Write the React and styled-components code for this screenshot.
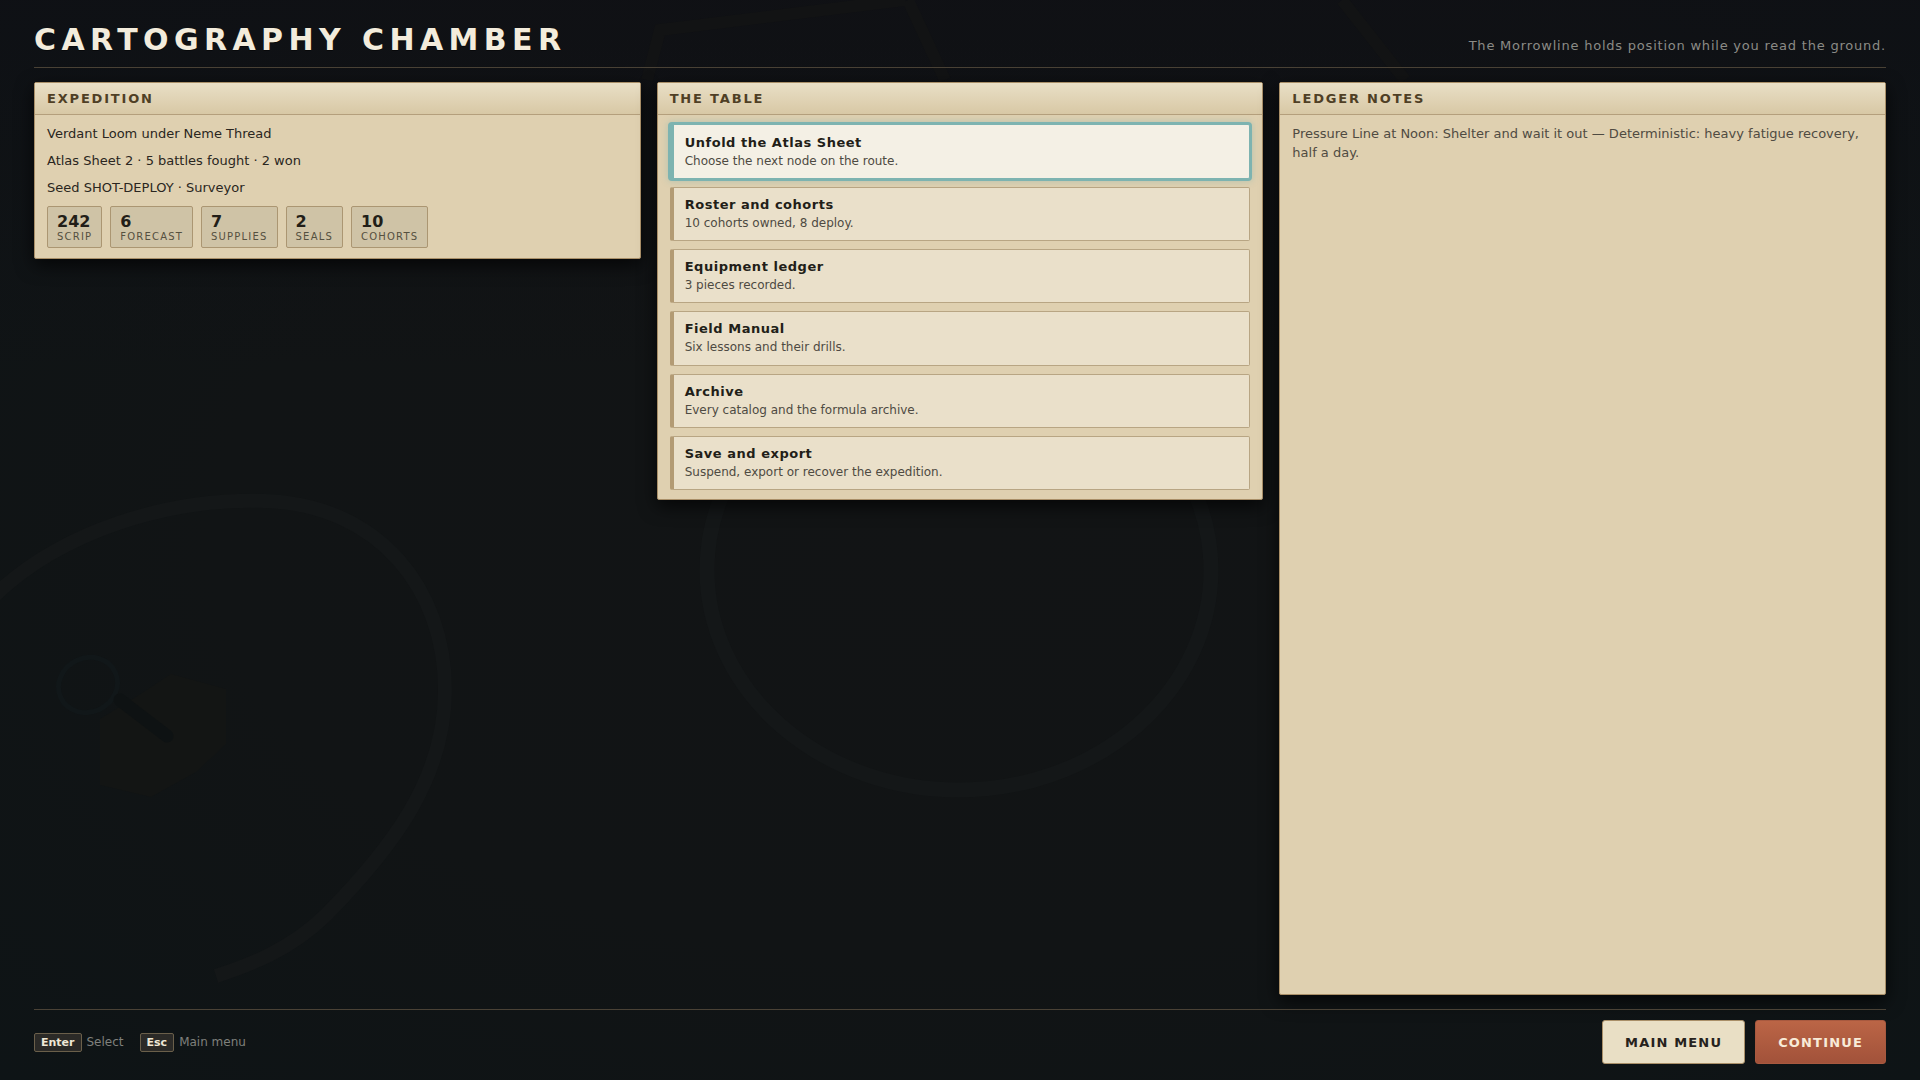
import React from "react";
import styled, { createGlobalStyle } from "styled-components";

const Global = createGlobalStyle`
  html, body { margin: 0; padding: 0; height: 100%; background: #101415; }
  #root { height: 100%; }
  * { box-sizing: border-box; }
`;

const Screen = styled.div`
  position: relative;
  width: 100%;
  height: 1080px;
  overflow: hidden;
  background:
    linear-gradient(180deg, rgba(15, 14, 20, .55) 0%, rgba(15, 14, 20, 0) 35%),
    radial-gradient(ellipse at 50% 50%, #121415 0%, #111415 55%, #0e1416 100%);
  font-family: "DejaVu Sans", sans-serif;
`;

const Backdrop = styled.svg`
  position: absolute;
  inset: 0;
  width: 1920px;
  height: 1080px;
  pointer-events: none;
`;

const Layout = styled.div`
  position: relative;
  height: 100%;
  padding: 16px 34px 16px;
  display: flex;
  flex-direction: column;
`;

const Header = styled.header`
  display: flex;
  justify-content: space-between;
  align-items: flex-end;
  height: 52px;
  padding-bottom: 9px;
  border-bottom: 1px solid #4a4236;
  margin-bottom: 14px;
`;

const Title = styled.h1`
  margin: 0;
  font-size: 30px;
  line-height: 36px;
  font-weight: 700;
  letter-spacing: 0.18em;
  color: #f3ecdc;
  text-shadow: 0 1px 0 rgba(0,0,0,.5);
`;

const Tagline = styled.p`
  margin: 0 0 4px;
  font-size: 13px;
  line-height: 16px;
  letter-spacing: 0.06em;
  color: #8b8b86;
`;

const Columns = styled.main`
  flex: 1;
  min-height: 0;
  display: grid;
  grid-template-columns: repeat(3, 1fr);
  gap: 16px;
  align-items: start;
`;

const Panel = styled.section`
  background: #dfd0b0;
  border: 1px solid #a98f68;
  border-radius: 2px;
  box-shadow: 0 6px 18px rgba(0,0,0,.7);
  height: ${(p) => (p.$fill ? "100%" : "auto")};
`;

const PanelHead = styled.h2`
  margin: 0;
  height: 32px;
  padding: 0 12px;
  display: flex;
  align-items: center;
  font-size: 13px;
  font-weight: 700;
  letter-spacing: 0.14em;
  color: #4f3f25;
  background: linear-gradient(180deg, #e9dfc6 0%, #d8c8a5 100%);
  border-bottom: 1px solid #b49f7c;
`;

const PanelBody = styled.div`
  padding: 9px 12px 10px;
`;

const Line = styled.p`
  margin: 0 0 8px;
  font-size: 13px;
  line-height: 19px;
  color: #2a2620;
`;

const Stats = styled.div`
  display: flex;
  gap: 8px;
  margin-top: 9px;
`;

const Stat = styled.div`
  display: flex;
  flex-direction: column;
  height: 42px;
  padding: 6px 9px 0;
  background: #cfc3a6;
  border: 1px solid #ab9672;
  border-radius: 2px;
`;

const StatValue = styled.span`
  font-size: 16px;
  line-height: 17px;
  font-weight: 700;
  color: #221e18;
`;

const StatLabel = styled.span`
  font-size: 10px;
  line-height: 13px;
  letter-spacing: 0.12em;
  color: #55503f;
`;

const Menu = styled.div`
  display: flex;
  flex-direction: column;
  gap: 8px;
  padding: 9.4px 12px 9.1px;
`;

const MenuItem = styled.button`
  display: block;
  width: 100%;
  height: 54.3px;
  padding: 0 0 0 11px;
  text-align: left;
  font-family: inherit;
  background: ${(p) => (p.$active ? "#f4f0e5" : "#eae0ca")};
  border: 1px solid ${(p) => (p.$active ? "#7db3b0" : "#b8a583")};
  border-left: 4px solid ${(p) => (p.$active ? "#7db3b0" : "#b39b74")};
  border-radius: 2px;
  box-shadow: ${(p) => (p.$active ? "0 0 0 2px #7db3b0, 0 0 6px 3px rgba(125,179,176,.35)" : "none")};
`;

const ItemTitle = styled.span`
  display: block;
  font-size: 13px;
  line-height: 18px;
  font-weight: 700;
  letter-spacing: 0.04em;
  color: #221e18;
`;

const ItemSub = styled.span`
  display: block;
  margin-top: 1px;
  font-size: 12px;
  line-height: 17px;
  color: #4e4a42;
`;

const Note = styled.p`
  margin: 0;
  font-size: 13px;
  line-height: 19px;
  color: #4f4b42;
`;

const Footer = styled.footer`
  margin-top: 14px;
  border-top: 1px solid #4a4236;
  padding-top: 10px;
  display: flex;
  justify-content: space-between;
  align-items: center;
`;

const Hints = styled.div`
  display: flex;
  align-items: center;
  gap: 16px;
`;

const Hint = styled.span`
  display: inline-flex;
  align-items: center;
  gap: 5px;
  font-size: 12px;
  color: #7f807c;
`;

const Kbd = styled.kbd`
  font-family: inherit;
  font-size: 11px;
  font-weight: 700;
  line-height: 17px;
  padding: 0 6px;
  color: #efe8d6;
  background: #2b2a27;
  border: 1px solid #6a5f4a;
  border-radius: 2px;
`;

const Actions = styled.div`
  display: flex;
  gap: 10px;
`;

const ActionButton = styled.button`
  height: 44px;
  padding: 0 22px;
  font-family: inherit;
  font-size: 13px;
  font-weight: 700;
  letter-spacing: 0.09em;
  border-radius: 3px;
  color: ${(p) => (p.$primary ? "#f8ebd8" : "#26221c")};
  background: ${(p) => (p.$primary ? "linear-gradient(180deg, #bb6546 0%, #a2523a 100%)" : "#e9dfc5")};
  border: 1px solid ${(p) => (p.$primary ? "#a8593f" : "#a98f68")};
`;

const stats = [
  ["242", "SCRIP"], ["6", "FORECAST"], ["7", "SUPPLIES"], ["2", "SEALS"], ["10", "COHORTS"],
];

const items = [
  ["Unfold the Atlas Sheet", "Choose the next node on the route."],
  ["Roster and cohorts", "10 cohorts owned, 8 deploy."],
  ["Equipment ledger", "3 pieces recorded."],
  ["Field Manual", "Six lessons and their drills."],
  ["Archive", "Every catalog and the formula archive."],
  ["Save and export", "Suspend, export or recover the expedition."],
];

export default function App() {
  return (
    <Screen>
      <Global />
      <Backdrop viewBox="0 0 1920 1080" fill="none">
        <path d="M-10 600 C60 530 170 498 265 501 C380 505 445 590 445 690 C445 780 390 850 326 915 C290 950 250 965 216 976" stroke="#141718" strokeWidth="14" />
        <ellipse cx="959" cy="570" rx="252" ry="220" stroke="#141718" strokeWidth="15" />
        <path d="M139 695 L171 674 L226 689 L226 744 L196 772 L151 797 L100 785 L100 719 Z" fill="#131514" />
        <ellipse cx="88" cy="685" rx="30" ry="27" stroke="#111719" strokeWidth="5" transform="rotate(-25 88 685)" />
        <path d="M120 700 L167 736" stroke="#0e1213" strokeWidth="13" strokeLinecap="round" />
        <path d="M647 80 L660 30 L905 0 M908 0 L945 80 M1342 0 L1405 80" stroke="#121314" strokeWidth="12" />
      </Backdrop>
      <Layout>
        <Header>
          <Title>CARTOGRAPHY CHAMBER</Title>
          <Tagline>The Morrowline holds position while you read the ground.</Tagline>
        </Header>
        <Columns>
          <Panel>
            <PanelHead>EXPEDITION</PanelHead>
            <PanelBody>
              <Line>Verdant Loom under Neme Thread</Line>
              <Line>Atlas Sheet 2 · 5 battles fought · 2 won</Line>
              <Line>Seed SHOT-DEPLOY · Surveyor</Line>
              <Stats>
                {stats.map(([v, l]) => (
                  <Stat key={l}>
                    <StatValue>{v}</StatValue>
                    <StatLabel>{l}</StatLabel>
                  </Stat>
                ))}
              </Stats>
            </PanelBody>
          </Panel>
          <Panel>
            <PanelHead>THE TABLE</PanelHead>
            <Menu>
              {items.map(([t, s], i) => (
                <MenuItem key={t} $active={i === 0}>
                  <ItemTitle>{t}</ItemTitle>
                  <ItemSub>{s}</ItemSub>
                </MenuItem>
              ))}
            </Menu>
          </Panel>
          <Panel $fill>
            <PanelHead>LEDGER NOTES</PanelHead>
            <PanelBody>
              <Note>Pressure Line at Noon: Shelter and wait it out — Deterministic: heavy fatigue recovery, half a day.</Note>
            </PanelBody>
          </Panel>
        </Columns>
        <Footer>
          <Hints>
            <Hint><Kbd>Enter</Kbd>Select</Hint>
            <Hint><Kbd>Esc</Kbd>Main menu</Hint>
          </Hints>
          <Actions>
            <ActionButton>MAIN MENU</ActionButton>
            <ActionButton $primary>CONTINUE</ActionButton>
          </Actions>
        </Footer>
      </Layout>
    </Screen>
  );
}
